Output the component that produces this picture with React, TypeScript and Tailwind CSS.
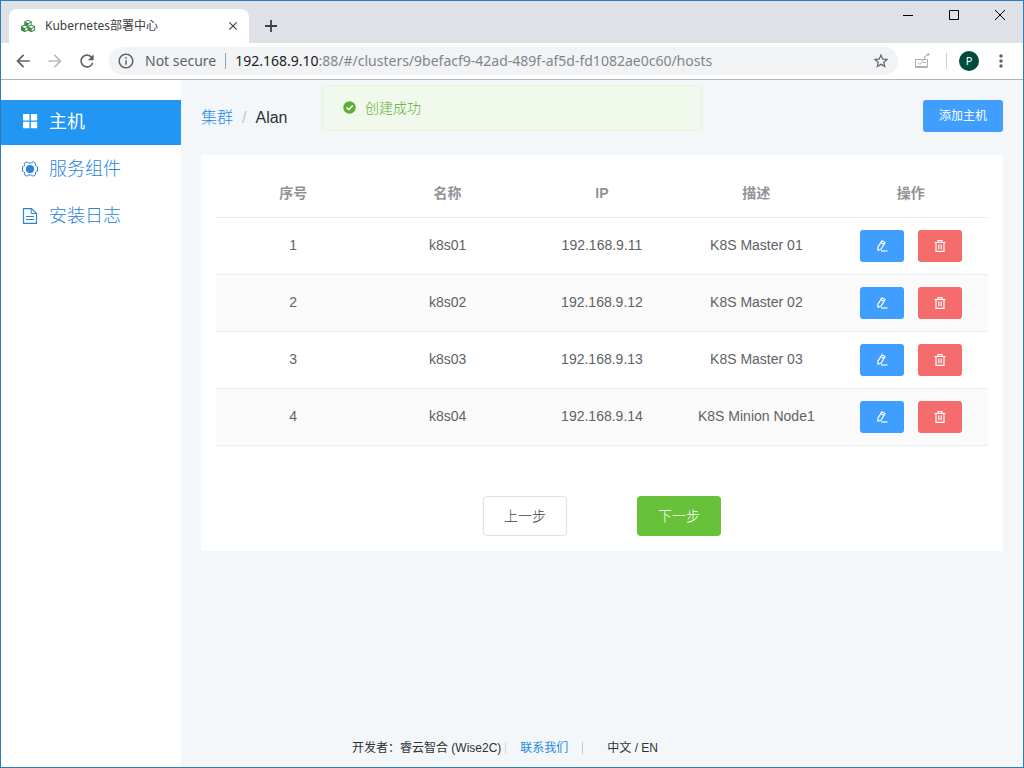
import type { ReactNode } from "react";
import {
  MdArrowBack,
  MdArrowForward,
  MdClose,
  MdInfoOutline,
  MdMoreVert,
  MdOutlineStarBorder,
  MdRefresh,
} from "react-icons/md";
import { FaCubes } from "react-icons/fa";

const chromeFont = "font-['Noto_Sans','Noto_Sans_CJK_SC',sans-serif]";

const hosts = [
  { id: 1, name: "k8s01", ip: "192.168.9.11", desc: "K8S Master 01" },
  { id: 2, name: "k8s02", ip: "192.168.9.12", desc: "K8S Master 02" },
  { id: 3, name: "k8s03", ip: "192.168.9.13", desc: "K8S Master 03" },
  { id: 4, name: "k8s04", ip: "192.168.9.14", desc: "K8S Minion Node1" },
];

const columns = ["序号", "名称", "IP", "描述", "操作"];

function MenuIcon() {
  return (
    <svg viewBox="0 0 16 16" className="size-4" fill="currentColor" aria-hidden>
      <rect x="1" y="0" width="6.4" height="6.4" rx="0.5" />
      <rect x="8.8" y="0" width="6.4" height="6.4" rx="0.5" />
      <rect x="1" y="7.8" width="6.4" height="6.4" rx="0.5" />
      <rect x="8.8" y="7.8" width="6.4" height="6.4" rx="0.5" />
    </svg>
  );
}

function GearIcon() {
  return (
    <svg viewBox="0 0 16 16" className="size-4" fill="none" stroke="currentColor" aria-hidden>
      <path
        d="M4.9 .7 Q6 2.1 8 2.1 Q10 2.1 11.1 .7 L13.7 2.3 Q13.1 4 13.8 5.1 Q14.4 5.8 15.5 5.9 V10.1 Q14.4 10.2 13.8 10.9 Q13.1 12 13.7 13.7 L11.1 15.3 Q10 13.9 8 13.9 Q6 13.9 4.9 15.3 L2.3 13.7 Q2.9 12 2.2 10.9 Q1.6 10.2 .5 10.1 V5.9 Q1.6 5.8 2.2 5.1 Q2.9 4 2.3 2.3 Z"
        strokeLinejoin="round"
      />
      <circle cx="8" cy="8" r="4.1" fill="currentColor" stroke="none" />
    </svg>
  );
}

function DocumentIcon() {
  return (
    <svg viewBox="0 0 16 16" className="size-4" fill="none" stroke="currentColor" aria-hidden>
      <path d="M1.5 .6H9.5L14.5 5.5V15.4H1.5Z" strokeWidth="1.2" />
      <path d="M9.2 .8V5.5H14.4M4 8.5H12M4 11.5H12" />
    </svg>
  );
}

function EditIcon() {
  return (
    <svg viewBox="0 0 12 12" className="size-3" fill="none" stroke="currentColor" strokeWidth="1.2" aria-hidden>
      <path d="M5.9 .8 9 2.6 5 9.2 2 10.3 1.8 7.4ZM4.8 2.6 7.9 4.4" strokeLinejoin="round" />
      <path d="M5 11H11.5" />
    </svg>
  );
}

function TrashIcon() {
  return (
    <svg viewBox="0 0 12 12" className="size-3" fill="none" stroke="currentColor" strokeWidth="1.2" aria-hidden>
      <path d="M.5 2.5H11.5M2 2.5V11.3H10V2.5M4 2.5V.7H8V2.5M4.8 4.5V9.2M7.2 4.5V9.2" />
    </svg>
  );
}

function TitleBar() {
  return (
    <div className={`flex h-[42px] items-end bg-[#dee1e6] pl-2 text-[#3c4043] ${chromeFont}`}>
      <div className="flex h-[34px] w-60 items-center rounded-t-lg bg-white pl-3 pr-2">
        <FaCubes className="size-[14px] text-[#3d8b47]" aria-hidden />
        <span className="ml-[10px] flex-1 text-xs">Kubernetes部署中心</span>
        <button type="button" aria-label="Close tab" className="flex size-4 items-center justify-center">
          <MdClose className="size-[14px]" />
        </button>
      </div>
      <button type="button" aria-label="New tab" className="flex h-[34px] w-11 items-center justify-center">
        <svg viewBox="0 0 12 12" className="size-3" stroke="currentColor" strokeWidth="1.8" aria-hidden>
          <path d="M6 0V12M0 6H12" />
        </svg>
      </button>
      <div className="ml-auto flex h-[42px] items-start text-black">
        <button type="button" aria-label="Minimize" className="flex h-7 w-[46px] items-center justify-center">
          <svg viewBox="0 0 10 10" className="size-[10px]" stroke="currentColor" aria-hidden>
            <path d="M0 5.5H10" />
          </svg>
        </button>
        <button type="button" aria-label="Maximize" className="flex h-7 w-[46px] items-center justify-center">
          <svg viewBox="0 0 10 10" className="size-[10px]" fill="none" stroke="currentColor" aria-hidden>
            <path d="M.5 .5H9.5V9.5H.5Z" />
          </svg>
        </button>
        <button type="button" aria-label="Close" className="flex h-7 w-[46px] items-center justify-center">
          <svg viewBox="0 0 10 10" className="size-[10px]" stroke="currentColor" aria-hidden>
            <path d="M0 0 10 10M10 0 0 10" />
          </svg>
        </button>
      </div>
    </div>
  );
}

function Toolbar() {
  return (
    <div className={`flex h-[37px] items-center border-b border-[#b0b4b8] bg-white px-3 text-[#5f6368] ${chromeFont}`}>
      <button type="button" aria-label="Back">
        <MdArrowBack className="size-5" />
      </button>
      <button type="button" aria-label="Forward" className="ml-3 text-[#babcbe]">
        <MdArrowForward className="size-5" />
      </button>
      <button type="button" aria-label="Reload" className="ml-3">
        <MdRefresh className="size-5" />
      </button>
      <div className="ml-3 flex h-7 flex-1 items-center rounded-full bg-[#f1f3f4] px-2 text-sm">
        <MdInfoOutline className="size-[18px]" aria-hidden />
        <span className="ml-[10px]">Not secure</span>
        <span className="mx-[9px] h-4 w-px bg-[#9aa0a6]" />
        <span className="flex-1 whitespace-nowrap text-[#80868b]">
          <span className="text-[#202124]">192.168.9.10</span>
          :88/#/clusters/9befacf9-42ad-489f-af5d-fd1082ae0c60/hosts
        </span>
        <button type="button" aria-label="Bookmark">
          <MdOutlineStarBorder className="size-[18px]" />
        </button>
      </div>
      <button type="button" aria-label="Extension" className="ml-4 text-[#b0b0b0]">
        <svg viewBox="0 0 16 16" className="size-4" fill="none" stroke="currentColor" aria-hidden>
          <path d="M1 6.5H13.5V14.5H1.5V6M1 13.5H13.5M3.5 9 6 11.5 11.5 4M10 4.5 14.5 1M9 9.5H12" />
          <path d="M13 1.5H15.5" strokeWidth="2" />
        </svg>
      </button>
      <span className="ml-4 h-4 w-px bg-[#cdd0d3]" />
      <button
        type="button"
        aria-label="Profile"
        className="ml-3 flex size-5 items-center justify-center rounded-full bg-[#00493d] text-[11px] text-white"
      >
        P
      </button>
      <button type="button" aria-label="Menu" className="ml-3">
        <MdMoreVert className="size-5" />
      </button>
    </div>
  );
}

function NavItem({ icon, label, active }: { icon: ReactNode; label: string; active?: boolean }) {
  return (
    <a
      href="#"
      className={`flex h-[45px] items-center gap-[11px] pb-[2px] pl-[21px] text-lg ${
        active ? "bg-[#2196f3] text-white" : "font-light text-[#2b83dc]"
      }`}
    >
      {icon}
      {label}
    </a>
  );
}

function HostTable() {
  return (
    <table className="w-full table-fixed text-center text-sm text-[#606266]">
      <thead>
        <tr className="h-[47px] border-b border-[#ebeef5] text-[#909399]">
          {columns.map((c) => (
            <th key={c} scope="col" className="font-bold">
              {c}
            </th>
          ))}
        </tr>
      </thead>
      <tbody>
        {hosts.map((h) => (
          <tr key={h.id} className="h-[57px] border-b border-[#ebeef5] even:bg-[#fafafa]">
            <td className="pb-[2px]">{h.id}</td>
            <td className="pb-[2px]">{h.name}</td>
            <td className="pb-[2px]">{h.ip}</td>
            <td className="pb-[2px]">{h.desc}</td>
            <td>
              <div className="flex justify-center gap-[14px] text-white">
                <button
                  type="button"
                  aria-label="编辑"
                  className="flex h-8 w-11 items-center justify-center rounded-[3px] bg-[#409eff]"
                >
                  <EditIcon />
                </button>
                <button
                  type="button"
                  aria-label="删除"
                  className="flex h-8 w-11 items-center justify-center rounded-[3px] bg-[#f56c6c]"
                >
                  <TrashIcon />
                </button>
              </div>
            </td>
          </tr>
        ))}
      </tbody>
    </table>
  );
}

export default function App() {
  return (
    <div className="flex min-h-screen flex-col border border-[#2e7db8] font-['Liberation_Sans','Noto_Sans_CJK_SC',sans-serif]">
      <TitleBar />
      <Toolbar />

      <div className="relative flex flex-1 bg-[#f3f7fa]">
        <nav className="flex w-[180px] shrink-0 flex-col gap-[2px] bg-white pt-5">
          <NavItem icon={<MenuIcon />} label="主机" active />
          <NavItem icon={<GearIcon />} label="服务组件" />
          <NavItem icon={<DocumentIcon />} label="安装日志" />
        </nav>

        <main className="flex min-w-0 flex-1 flex-col">
          <div className="flex items-end justify-between px-5 pt-5">
            <div className="flex items-center gap-[9px] text-base leading-7">
              <a href="#" className="font-light text-[#1e88e5]">
                集群
              </a>
              <span className="text-[#c0c4cc]">/</span>
              <span className="text-[#303133]">Alan</span>
            </div>
            <button type="button" className="h-8 w-20 rounded-[3px] bg-[#409eff] text-xs text-white">
              添加主机
            </button>
          </div>

          <section className="mx-5 mt-[23px] bg-white p-[15px]">
            <HostTable />
            <div className="mt-[50px] flex justify-center gap-[70px] text-sm font-light">
              <button type="button" className="h-10 w-[84px] rounded border border-[#dcdfe6] text-[#404246]">
                上一步
              </button>
              <button type="button" className="h-10 w-[84px] rounded bg-[#67c23a] text-white">
                下一步
              </button>
            </div>
          </section>

          {/* centred on the whole page, not on the content column */}
          <footer className="-ml-[180px] mt-auto flex items-center justify-center pb-[11px] pr-[14px] text-xs text-[#303133]">
            <span>开发者：睿云智合 (Wise2C)</span>
            <span className="ml-1 h-3 w-px bg-[#d5d9de]" />
            <a href="#" className="ml-[14px] text-[#1e88e5]">
              联系我们
            </a>
            <span className="ml-[14px] h-3 w-px bg-[#c5c9ce]" />
            <span className="ml-6">中文 / EN</span>
          </footer>
        </main>

        <div
          role="alert"
          className="absolute left-1/2 top-[5px] flex h-[46px] w-[380px] -translate-x-1/2 items-center gap-2 rounded border border-[#e1f3d8] bg-[#f0f9eb] px-5 text-sm text-[#5dae34]"
        >
          <svg viewBox="0 0 14 14" className="size-[14px]" aria-hidden>
            <circle cx="6.5" cy="6.5" r="6.2" fill="#5dae34" />
            <path d="M3.5 6.5 5.8 8.7 9.7 4.5" fill="none" stroke="#fff" strokeWidth="1.5" />
          </svg>
          <p className="font-light">创建成功</p>
        </div>
      </div>
    </div>
  );
}
